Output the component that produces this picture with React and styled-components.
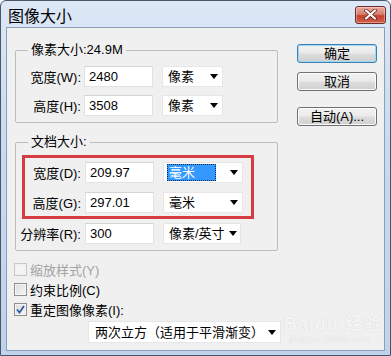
import React from "react";
import styled, { createGlobalStyle } from "styled-components";

const GlobalStyle = createGlobalStyle`
  html, body {
    margin: 0;
    padding: 0;
    background: #ffffff;
  }
  * {
    box-sizing: border-box;
  }
`;

const FONT = `"Liberation Sans", "Noto Sans CJK SC", sans-serif`;

const Window = styled.div`
  width: 391px;
  height: 356px;
  border: 1px solid #4a5566;
  border-radius: 6px 6px 0 0;
  background: linear-gradient(180deg, #dce8f6 0%, #c8dbf0 40%, #bed3ec 100%);
  display: flex;
  flex-direction: column;
  padding: 0 5px 4px 5px;
  font-family: ${FONT};
  overflow: hidden;
`;

const TitleBar = styled.div`
  height: 26px;
  display: flex;
  align-items: center;
  justify-content: space-between;
  padding: 0 0 0 2px;
`;

const Title = styled.div`
  font-size: 16px;
  color: #000;
  margin-top: 1px;
`;

const CloseButton = styled.div`
  width: 31px;
  height: 18px;
  margin-top: 1px;
  margin-right: -1px;
  border: 1px solid #6b2b26;
  border-radius: 3px;
  background: linear-gradient(180deg, #e9a99c 0%, #d7806f 45%, #c4402c 55%, #d2604a 100%);
  display: flex;
  align-items: center;
  justify-content: center;
  box-shadow: inset 0 0 0 1px rgba(255, 255, 255, 0.35);
`;

const Client = styled.div`
  flex: 1;
  background: #f0f0f0;
  border: 1px solid #8c9fb6;
  display: flex;
  padding: 14px 0 0 8px;
  position: relative;
`;

const LeftCol = styled.div`
  width: 264px;
  display: flex;
  flex-direction: column;
`;

const RightCol = styled.div`
  margin-left: 18px;
  padding-top: 2px;
  display: flex;
  flex-direction: column;
`;

const Group = styled.fieldset`
  margin: ${(p) => p.$mt ?? 0}px 0 0 0;
  padding: 0 0 ${(p) => p.$pb ?? 6}px 0;
  border: 1px solid #bcbcbc;
  border-radius: 2px;
  min-inline-size: 0;
  width: 263px;
`;

const Legend = styled.legend`
  font-size: 13px;
  line-height: 16px;
  height: 16px;
  color: #000;
  padding: 0 3px;
  margin-left: 12px;
`;

const Rows = styled.div`
  display: flex;
  flex-direction: column;
  gap: ${(p) => p.$gap ?? 8}px;
  padding-top: ${(p) => p.$pt ?? 0}px;
`;

const Row = styled.div`
  display: flex;
  align-items: center;
  height: 21px;
`;

const Label = styled.div`
  width: ${(p) => p.$w ?? 66}px;
  text-align: right;
  font-size: 13px;
  color: #000;
  white-space: nowrap;
  padding-right: 1px;
`;

const Input = styled.div`
  width: 69px;
  height: 21px;
  margin-left: ${(p) => p.$ml ?? 2}px;
  background: #fff;
  border: 1px solid #e2e2e2;
  border-top-color: #d4d4d4;
  font-size: 13px;
  line-height: 19px;
  padding-left: 4px;
  color: #000;
`;

const Select = styled.div`
  width: ${(p) => p.$w ?? 61}px;
  height: 21px;
  margin-left: 9px;
  background: #fff;
  border: 1px solid #e6e6e6;
  display: flex;
  align-items: center;
  padding: 0 4px 0 3px;
  font-size: 13px;
  color: #000;
`;

const SelectText = styled.div`
  flex: 1;
  height: 17px;
  line-height: 17px;
  padding-left: 2px;
  white-space: nowrap;
  ${(p) =>
    p.$active &&
    `
    background: #3399ff;
    color: #fff;
    outline: 1px dotted #0a2a55;
    outline-offset: -1px;
    margin-right: 10px;
  `}
`;

const Arrow = styled.div`
  width: 0;
  height: 0;
  border-left: 4px solid transparent;
  border-right: 4px solid transparent;
  border-top: 5px solid #000;
  margin-left: 4px;
  flex-shrink: 0;
`;

const RedBox = styled.div`
  margin: 5px 0 0 6px;
  width: 232px;
  border: 3px solid #d63c43;
  padding: 4px 0 3px 0;
  display: flex;
  flex-direction: column;
  gap: 9px;
`;

const CheckRow = styled.div`
  display: flex;
  align-items: center;
  height: 20px;
  font-size: 13px;
  color: ${(p) => (p.$disabled ? "#a3a3a3" : "#000")};
  margin-left: -1px;
`;

const Box = styled.div`
  width: 13px;
  height: 13px;
  border: 1px solid ${(p) => (p.$disabled ? "#c8c8c8" : "#8e8f8f")};
  background: ${(p) =>
    p.$disabled ? "#f4f4f4" : "linear-gradient(135deg, #dcdcdc 0%, #f6f6f6 100%)"};
  box-shadow: inset 0 0 0 1px ${(p) => (p.$disabled ? "#f0f0f0" : "#f4f4f4")};
  margin-right: 3px;
  display: flex;
  align-items: center;
  justify-content: center;
`;

const BottomSelect = styled(Select)`
  margin-left: 73px;
  margin-top: 2px;
  height: 22px;
  width: 193px;
  padding-left: 4px;
  padding-right: 6px;
`;

const Button = styled.div`
  width: 80px;
  height: 19px;
  margin-top: ${(p) => p.$mt ?? 0}px;
  border: 1px solid ${(p) => (p.$focus ? "#3c7fb1" : "#707070")};
  border-radius: 3px;
  background: linear-gradient(180deg, #f2f2f2 0%, #ebebeb 48%, #dddddd 52%, #cfcfcf 100%);
  box-shadow: inset 0 0 0 1px ${(p) => (p.$focus ? "#9fd5f5" : "#fcfcfc")};
  font-size: 13px;
  line-height: 17px;
  text-align: center;
  color: #000;
`;

const Watermark = styled.div`
  position: absolute;
  left: 277px;
  top: 287px;
  color: rgba(255, 255, 255, 0.8);
  text-shadow: 0 0 1px rgba(190, 190, 190, 0.7);
  font-family: ${FONT};
  pointer-events: none;
`;

const WmMain = styled.div`
  font-size: 18px;
  line-height: 18px;
  font-weight: bold;
  letter-spacing: 1px;
`;

const WmSub = styled.div`
  font-size: 9px;
  line-height: 11px;
  margin-top: 1px;
  padding-left: 6px;
  letter-spacing: 0.5px;
`;

function Check() {
  return (
    <svg width="9" height="9" viewBox="0 0 9 9">
      <path d="M1 4.5 L3.5 7.5 L8 1" fill="none" stroke="#2c5aa8" strokeWidth="1.8" />
    </svg>
  );
}

function DropDown({ text, w, active }) {
  return (
    <Select $w={w}>
      <SelectText $active={active}>{text}</SelectText>
      <Arrow />
    </Select>
  );
}

export default function App() {
  return (
    <>
      <GlobalStyle />
      <Window>
        <TitleBar>
          <Title>图像大小</Title>
          <CloseButton>
            <svg width="13" height="11" viewBox="0 0 13 11">
              <path d="M2 1.5 L11 9.5 M11 1.5 L2 9.5" stroke="#5a1a14" strokeWidth="3.6" strokeLinecap="round" />
              <path d="M2 1.5 L11 9.5 M11 1.5 L2 9.5" stroke="#ffffff" strokeWidth="2.2" strokeLinecap="round" />
            </svg>
          </CloseButton>
        </TitleBar>
        <Client>
          <LeftCol>
            <Group $pb={6}>
              <Legend>像素大小:24.9M</Legend>
              <Rows $pt={8} $gap={8}>
                <Row>
                  <Label>宽度(W):</Label>
                  <Input>2480</Input>
                  <DropDown text="像素" />
                </Row>
                <Row>
                  <Label>高度(H):</Label>
                  <Input>3508</Input>
                  <DropDown text="像素" />
                </Row>
              </Rows>
            </Group>

            <Group $mt={11} $pb={6}>
              <Legend>文档大小:</Legend>
              <RedBox>
                <Row>
                  <Label $w={57}>宽度(D):</Label>
                  <Input $ml={3}>209.97</Input>
                  <DropDown text="毫米" w={80} active />
                </Row>
                <Row>
                  <Label $w={57}>高度(G):</Label>
                  <Input $ml={3}>297.01</Input>
                  <DropDown text="毫米" w={80} />
                </Row>
              </RedBox>
              <Rows $pt={4}>
                <Row>
                  <Label $w={66}>分辨率(R):</Label>
                  <Input $ml={3}>300</Input>
                  <DropDown text="像素/英寸" w={78} />
                </Row>
              </Rows>
            </Group>

            <Rows $pt={8} $gap={0}>
              <CheckRow $disabled>
                <Box $disabled />
                缩放样式(Y)
              </CheckRow>
              <CheckRow>
                <Box />
                约束比例(C)
              </CheckRow>
              <CheckRow>
                <Box>
                  <Check />
                </Box>
                重定图像像素(I):
              </CheckRow>
            </Rows>
            <BottomSelect>
              <SelectText>两次立方（适用于平滑渐变）</SelectText>
              <Arrow />
            </BottomSelect>
          </LeftCol>

          <RightCol>
            <Button $focus>确定</Button>
            <Button $mt={9}>取消</Button>
            <Button $mt={16}>自动(A)...</Button>
          </RightCol>

          <Watermark>
            <WmMain>Baidu 经验</WmMain>
            <WmSub>jingyan.baidu.com</WmSub>
          </Watermark>
        </Client>
      </Window>
    </>
  );
}
